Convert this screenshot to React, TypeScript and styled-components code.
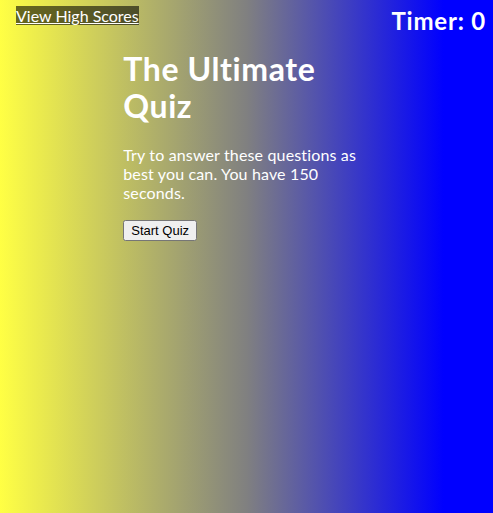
import React from "react";
import styled, { createGlobalStyle } from "styled-components";

const Global = createGlobalStyle`
  html, body { margin: 0; padding: 0; }
  body {
    min-height: 513px;
    background: linear-gradient(to right, #ffff44 0%, #808080 50%, #0000ff 90%);
    font-family: "Trebuchet MS", Lato, "Open Sans", sans-serif;
    color: #fff;
  }
`;

const Page = styled.div`
  min-height: 513px;
`;

const Header = styled.header`
  display: flex;
  justify-content: space-between;
  align-items: flex-start;
  padding: 6px 7px 0 16px;
`;

const ScoresLink = styled.a`
  font-size: 16px;
  color: #fff;
  text-decoration: underline;
  background: rgba(0, 0, 0, 0.58);
  line-height: 19px;
`;

const Timer = styled.div`
  font-size: 24px;
  font-weight: bold;
  line-height: 28px;
  margin-top: 1px;
  letter-spacing: 0.8px;
`;

const Main = styled.main`
  width: 50%;
  margin: 0 auto;
`;

const Title = styled.h1`
  font-size: 32px;
  font-weight: bold;
  line-height: 37px;
  letter-spacing: 0.6px;
  margin: 15px 0 21px;
`;

const Intro = styled.p`
  font-size: 16px;
  line-height: 19px;
  letter-spacing: 0.15px;
  margin: 0 0 17px;
`;

const StartButton = styled.button`
  font-family: "Liberation Sans", Arial, sans-serif;
  font-size: 13px;
  padding: 1px 6px;
`;

export default function App() {
  return (
    <Page>
      <Global />
      <Header>
        <ScoresLink href="#">View High Scores</ScoresLink>
        <Timer>Timer: 0</Timer>
      </Header>
      <Main>
        <Title>The Ultimate Quiz</Title>
        <Intro>
          Try to answer these questions as best you can. You have 150 seconds.
        </Intro>
        <StartButton>Start Quiz</StartButton>
      </Main>
    </Page>
  );
}
